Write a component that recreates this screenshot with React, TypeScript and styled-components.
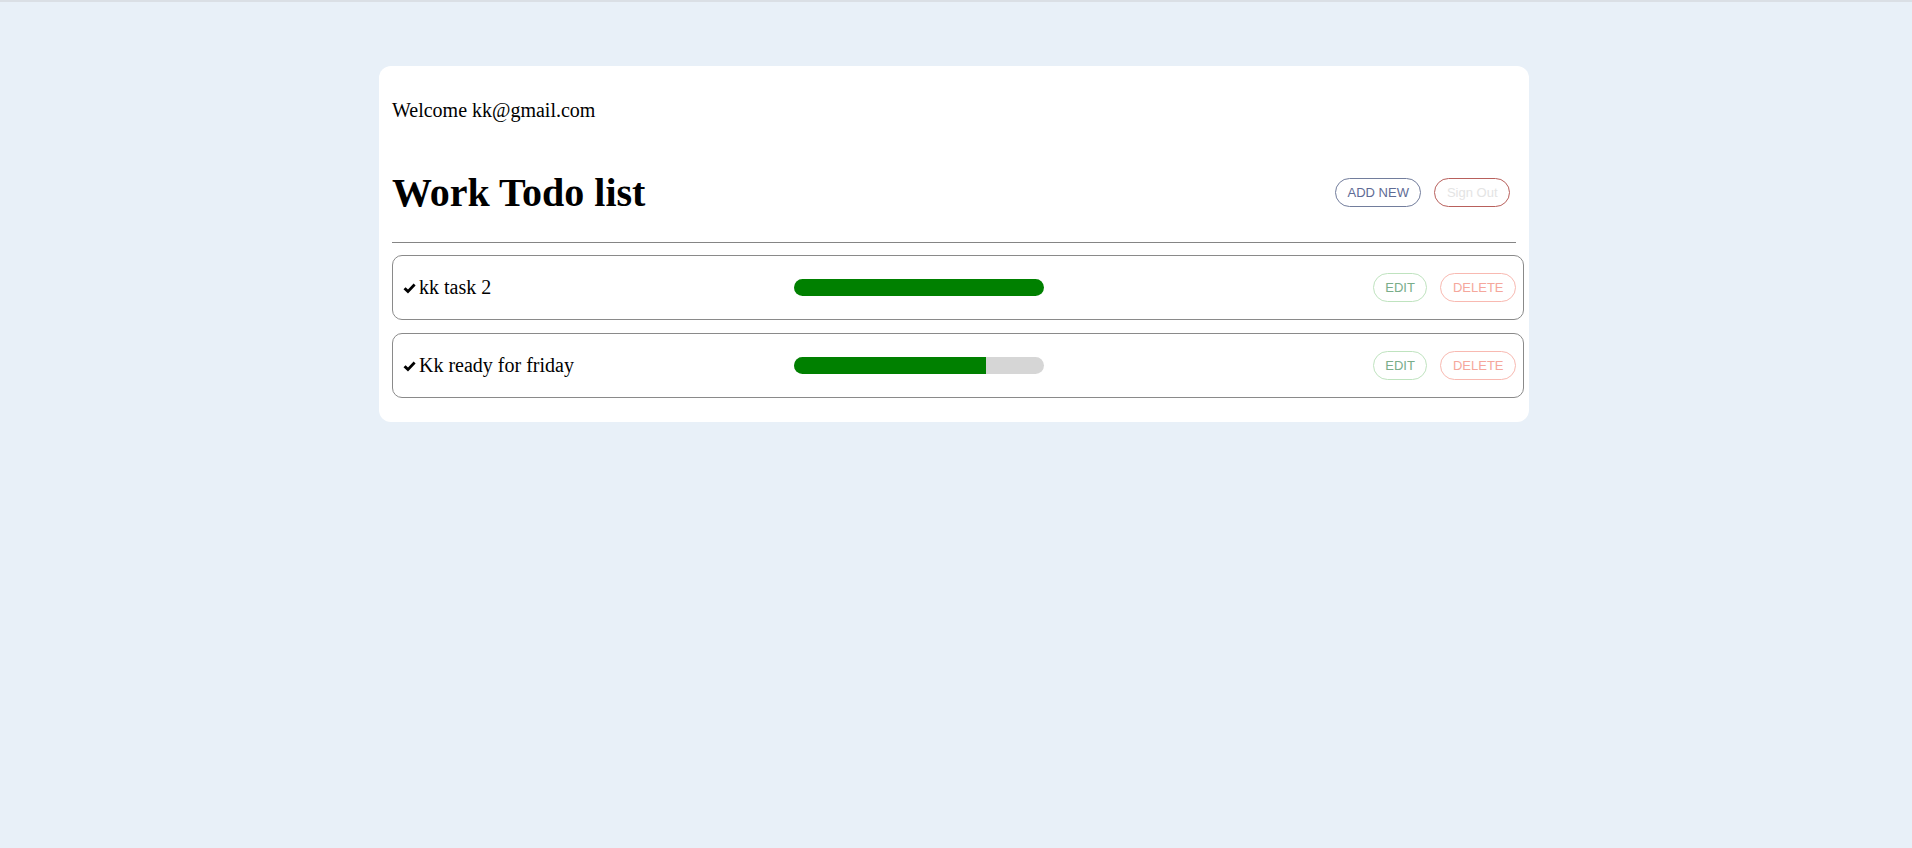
import * as React from 'react';
import styled, { createGlobalStyle } from "styled-components";

const GlobalStyle = createGlobalStyle`
  body {
    margin: 0;
    background: #e8f0f8;
    font-family: "Liberation Serif", "Times New Roman", serif;
  }
`;

const Page = styled.div`
  border-top: 2px solid #dadfe5;
  padding: 64px 4px 0 0;
`;

const Card = styled.div`
  width: 1150px;
  margin: 0 auto;
  box-sizing: border-box;
  padding: 13px;
  background: #fff;
  border-radius: 12px;
`;

const Welcome = styled.p`
  margin: 20px 0;
  font-size: 20px;
  color: #000;
`;

const Header = styled.div`
  display: flex;
  align-items: center;
  justify-content: space-between;
  padding-right: 6px;
`;

const Title = styled.h1`
  margin: 27px 0 26px;
  font-size: 40px;
  font-weight: 700;
`;

const Actions = styled.div`
  display: flex;
  gap: 13px;
`;

const PillButton = styled.button<{ $border: string; $color: string }>`
  height: 29px;
  padding: 0 11.5px;
  background: #fff;
  border: 1px solid ${(p) => p.$border};
  color: ${(p) => p.$color};
  border-radius: 15px;
  font-family: "Liberation Sans", Arial, sans-serif;
  font-size: 13px;
  cursor: pointer;
`;

const Divider = styled.hr`
  margin: 0;
  border: none;
  border-top: 1px solid #858585;
`;

const List = styled.div`
  display: flex;
  flex-direction: column;
  gap: 13px;
  padding: 12px 0 11px;
`;

const Row = styled.div`
  width: calc(100% + 8px);
  box-sizing: border-box;
  height: 65px;
  display: grid;
  grid-template-columns: 391px 250px 1fr;
  align-items: center;
  padding: 0 7px 0 10px;
  border: 1px solid #8a8a8a;
  border-radius: 10px;
`;

const TaskName = styled.span`
  font-size: 20px;
  display: flex;
  align-items: center;
  gap: 3px;
`;

const Check = styled.svg`
  width: 13px;
  height: 11px;
  flex-shrink: 0;
  margin-top: 1px;
`;

const Track = styled.div`
  height: 17px;
  border-radius: 9px;
  background: #d6d6d6;
  overflow: hidden;
`;

const Fill = styled.div`
  height: 100%;
  background: #008000;
`;

const RowActions = styled.div`
  display: flex;
  justify-content: flex-end;
  gap: 13px;
`;

const tasks = [
    { name: "kk task 2", progress: 100 },
    { name: "Kk ready for friday", progress: 76.8 },
];

const App = () => {
    return (
        <Page>
            <GlobalStyle />
            <Card>
                <Welcome>Welcome kk@gmail.com</Welcome>
                <Header>
                    <Title>Work Todo list</Title>
                    <Actions>
                        <PillButton $border="#727d9c" $color="#5e6b95">ADD NEW</PillButton>
                        <PillButton $border="#b8605c" $color="#e4e4e4">Sign Out</PillButton>
                    </Actions>
                </Header>
                <Divider />
                <List>
                    {tasks.map((t) => (
                        <Row key={t.name}>
                            <TaskName>
                                <Check viewBox="0 0 13 11" aria-hidden>
                                    <path d="M0.5 6.2 L2.6 4.3 L5 6.6 L10.6 0.6 L12.6 2.4 L5 10.6 Z" fill="#000" />
                                </Check>
                                {t.name}
                            </TaskName>
                            <Track>
                                <Fill style={{ width: `${t.progress}%` }} />
                            </Track>
                            <RowActions>
                                <PillButton $border="#bfe3bf" $color="#79ad89">EDIT</PillButton>
                                <PillButton $border="#f8b9b1" $color="#f5a79c">DELETE</PillButton>
                            </RowActions>
                        </Row>
                    ))}
                </List>
            </Card>
        </Page>
    );
};

export default App;
